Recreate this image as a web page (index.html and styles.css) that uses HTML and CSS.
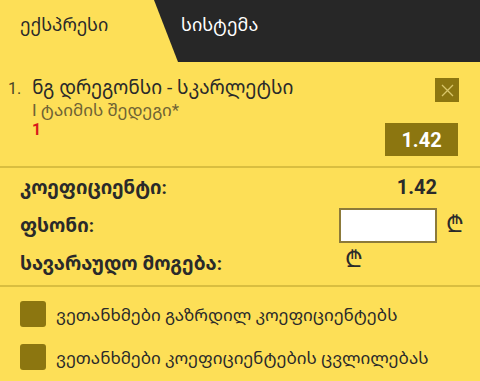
FILE: index.html
```html
<!DOCTYPE html>
<html lang="ka">
<head>
    <meta charset="UTF-8">
    <title>ბილეთი</title>
    <link rel="stylesheet" href="styles.css">
</head>
<body>
    <!-- ტაბები -->
    <div class="tabs">
        <div class="tab active">ექსპრესი</div>
        <div class="tab dark">სისტემა</div>
    </div>

    <!-- არჩეული ფსონი -->
    <div class="bet-item">
        <div class="bet-num">1.</div>
        <div class="bet-info">
            <div class="bet-title">ნგ დრეგონსი - სკარლეტსი</div>
            <div class="bet-market">I ტაიმის შედეგი*</div>
            <div class="bet-pick">1</div>
        </div>
        <div class="bet-side">
            <div class="close-btn">
                <svg width="13" height="13" viewBox="0 0 13 13"><path d="M1 1L12 12M12 1L1 12" stroke="#d9c66a" stroke-width="1.3"/></svg>
            </div>
            <div class="odds-box">1.42</div>
        </div>
    </div>

    <!-- ჯამი -->
    <div class="summary">
        <div class="sum-row">
            <span class="sum-label">კოეფიციენტი:</span>
            <span class="sum-odds">1.42</span>
        </div>
        <div class="sum-row">
            <span class="sum-label">ფსონი:</span>
            <span class="stake-wrap"><input type="text" class="stake"><span class="lari">₾</span></span>
        </div>
        <div class="sum-row win-row">
            <span class="sum-label">სავარაუდო მოგება:</span>
            <span class="lari win-lari">₾</span>
        </div>
    </div>

    <!-- თანხმობა -->
    <div class="agree">
        <label class="check"><span class="box"></span>ვეთანხმები გაზრდილ კოეფიციენტებს</label>
        <label class="check"><span class="box"></span>ვეთანხმები კოეფიციენტების ცვლილებას</label>
    </div>
</body>
</html>
```

FILE: styles.css
```css
body {
    margin: 0;
    background-color: #fddf57;
    font-family: Roboto, "Noto Sans Georgian", "DejaVu Sans", sans-serif;
    color: #2a2a2a;
    width: 480px;
    height: 381px;
    overflow: hidden;
}

.tabs {
    display: flex;
    height: 62px;
}

.tab {
    display: flex;
    align-items: center;
    font-size: 18px;
    padding-bottom: 14px;
    box-sizing: border-box;
}

.tab.active {
    width: 154px;
    padding-left: 20px;
    color: #2a2a2a;
}

.tab.dark {
    flex: 1;
    color: #fff;
    background-color: #272727;
    clip-path: polygon(0 0, 100% 0, 100% 100%, 24px 100%);
    padding-left: 27px;
}

.bet-item {
    display: flex;
    padding: 14px 22px 10px 8px;
    border-bottom: 2px solid #d9be40;
    height: 80px;
}

.bet-num {
    width: 24px;
    font-size: 16px;
    color: #4a4326;
    padding-top: 3px;
}

.bet-info {
    flex: 1;
}

.bet-title {
    font-size: 19px;
    color: #2a2a2a;
    line-height: 24px;
}

.bet-market {
    font-size: 17px;
    color: #6f6334;
    line-height: 20px;
}

.bet-pick {
    font-size: 16px;
    font-weight: bold;
    color: #d8191b;
    line-height: 20px;
}

.bet-side {
    display: flex;
    flex-direction: column;
    align-items: flex-end;
    justify-content: space-between;
    padding-top: 2px;
}

.close-btn {
    width: 24px;
    height: 24px;
    margin-right: -1px;
    background-color: #8c7610;
    display: flex;
    align-items: center;
    justify-content: center;
}

.odds-box {
    width: 73px;
    height: 33px;
    background-color: #8c7610;
    color: #fff;
    font-weight: bold;
    font-size: 20px;
    display: flex;
    align-items: center;
    justify-content: center;
}

.summary {
    padding: 0 43px 3px 20px;
    border-bottom: 2px solid #d9be40;
}

.sum-row {
    display: flex;
    align-items: center;
    justify-content: space-between;
    height: 38px;
    font-size: 19px;
}

.sum-label {
    font-weight: bold;
}

.sum-odds {
    font-weight: bold;
    font-size: 20px;
}

.stake-wrap {
    position: relative;
    display: flex;
}

.stake {
    width: 94px;
    height: 31px;
    border: 2px solid #8c7a3a;
    padding: 0;
    box-sizing: content-box;
}

.lari {
    font-family: "DejaVu Sans", sans-serif;
    font-size: 23px;
    font-weight: normal;
    line-height: 1;
}

.stake-wrap .lari {
    position: absolute;
    left: 107px;
    top: 5px;
}

.win-row {
    justify-content: flex-start;
}

.win-lari {
    margin-left: 123px;
    margin-top: -8px;
}

.agree {
    padding: 14px 20px;
    display: flex;
    flex-direction: column;
    gap: 17px;
}

.check {
    display: flex;
    align-items: center;
    font-size: 17px;
}

.box {
    width: 26px;
    height: 26px;
    border-radius: 3px;
    background-color: #8c7610;
    margin-right: 10px;
}
```
